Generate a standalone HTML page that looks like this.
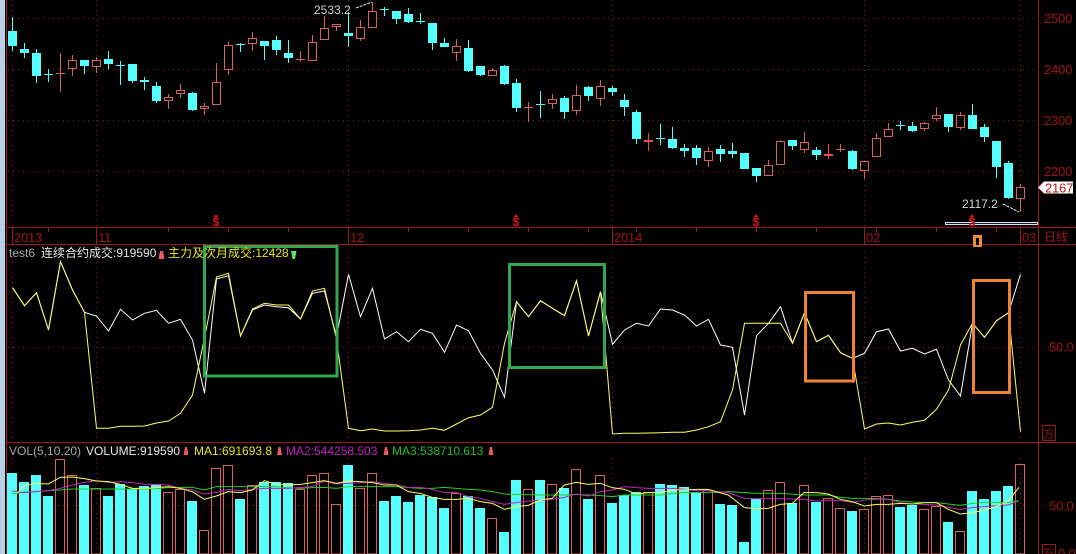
<!DOCTYPE html>
<html>
<head>
<meta charset="utf-8">
<style>
html,body{margin:0;padding:0;background:#000;width:1076px;height:554px;overflow:hidden}
svg{display:block;position:absolute;left:0;top:0}
text{font-family:"Liberation Sans","Noto Sans CJK SC",sans-serif;font-size:12px}
.ax{font-size:13px;letter-spacing:-.2px}
.dl{font-size:12px;font-weight:bold}
</style>
</head>
<body>
<svg width="1076" height="554" viewBox="0 0 1076 554" xmlns="http://www.w3.org/2000/svg">
<rect width="1076" height="554" fill="#000"/>
<rect x="0" y="0" width="5" height="554" fill="#b9d0e8"/>
<!-- grid -->
<g stroke="#8f1d1d" stroke-width="1" stroke-dasharray="1 4" fill="none">
<path d="M8 18.5H1038M8 69.5H1038M8 120.5H1038M8 171.5H1038"/>
<path d="M12.5 0V226M96.5 0V226M348.5 0V226M612.5 0V226M864.5 0V226M1020.5 0V226"/>
<path d="M8 347.5H1060"/>
<path d="M12.5 252V442M96.5 252V442M348.5 252V442M612.5 252V442M864.5 252V442M1020.5 252V442"/>
<path d="M8 505.5H1045"/>
<path d="M12.5 458V554M96.5 458V554M348.5 458V554M612.5 458V554M864.5 458V554M1020.5 458V554"/>
</g>
<!-- frame -->
<g stroke="#9c1a1a" stroke-width="1" fill="none">
<path d="M6.5 0V554M1038.5 0V554"/>
<path d="M6 227.5H1076M6 244.5H1076M6 442.5H1076"/>
<path d="M12.5 227V244M48.5 227V232M96.5 227V244M168.5 227V232M228.5 227V232M288.5 227V232M348.5 227V244M408.5 227V232M468.5 227V232M528.5 227V232M588.5 227V232M612.5 227V244M636.5 227V232M696.5 227V232M756.5 227V232M816.5 227V232M864.5 227V244M876.5 227V232M936.5 227V232M996.5 227V232M1020.5 227V244"/>
</g>
<!-- red candles -->
<path fill="none" stroke="#d9605c" stroke-width="1" d="M60.5 53V92M56 73.5h9
M72.5 55V60.5M72.5 68.5V76M68.5 60.5h8v8h-8z
M96.5 57V60.5M96.5 66.5V73M92.5 60.5h8v6h-8z
M168.5 94V97.5M168.5 100.5V109M164.5 97.5h8v3h-8z
M180.5 84V90.5M180.5 93.5V98M176.5 90.5h8v3h-8z
M204.5 103V106.5M204.5 108.5V115M200.5 106.5h8v2h-8z
M216.5 63V82.5M212.5 82.5h8v22h-8z
M228.5 42V45.5M228.5 69.5V75M224.5 45.5h8v24h-8z
M252.5 32V38.5M252.5 43.5V51M248.5 38.5h8v5h-8z
M300.5 51V62M296 59.5h9
M312.5 35V42.5M308.5 42.5h8v18h-8z
M324.5 16V28.5M320.5 28.5h8v11h-8z
M336.5 26.5V31M332.5 24.5h8v2h-8z
M360.5 20V27.5M360.5 38.5V41M356.5 27.5h8v11h-8z
M372.5 2V11.5M368.5 11.5h8v16h-8z
M456.5 39V46.5M456.5 52.5V61M452.5 46.5h8v6h-8z
M492.5 68V70.5M488.5 70.5h8v5h-8z
M528.5 102V122M524 107.5h9
M552.5 94V99.5M552.5 103.5V109M548.5 99.5h8v4h-8z
M576.5 85V95.5M576.5 110.5V115M572.5 95.5h8v15h-8z
M600.5 80V86.5M600.5 98.5V106M596.5 86.5h8v12h-8z
M708.5 147V151.5M708.5 160.5V167M704.5 151.5h8v9h-8z
M768.5 160V165.5M764.5 165.5h8v10h-8z
M780.5 140V141.5M776.5 141.5h8v23h-8z
M804.5 132V142.5M804.5 149.5V153M800.5 142.5h8v7h-8z
M840.5 144V152M836 149.5h9
M864.5 170.5V179M860.5 161.5h8v9h-8z
M876.5 133V138.5M872.5 138.5h8v18h-8z
M888.5 123V129.5M884.5 129.5h8v7h-8z
M924.5 122V123.5M924.5 128.5V131M920.5 123.5h8v5h-8z
M936.5 107V115.5M936.5 118.5V121M932.5 115.5h8v3h-8z
M960.5 112V115.5M960.5 127.5V130M956.5 115.5h8v12h-8z
M1020.5 184V187.5M1020.5 198.5V212M1016.5 187.5h8v11h-8z"/>
<path fill="none" stroke="#ee4d4d" stroke-width="1" d="M648.5 133V151M828.5 144V159"/>
<rect x="644" y="140" width="9" height="2" fill="#ee4d4d"/>
<rect x="824" y="154" width="9" height="2" fill="#ee4d4d"/>
<!-- cyan candles -->
<path fill="none" stroke="#55ffff" stroke-width="1" d="M12.5 17V51M24.5 43V58M36.5 49V83M48.5 69V82M44 74.5h9M84.5 60V74M108.5 51V69M120.5 61V85M116 65.5h9M132.5 64V83M144.5 77V90M156.5 82V103M192.5 92V111M240.5 43V52M236 44.5h9M264.5 41V60M276.5 36V55M288.5 40V63M348.5 12V47M384.5 7V16M380 9.5h9M396.5 11V24M408.5 8V23M420.5 13V24M416 21.5h9M432.5 23V50M444.5 38V47M468.5 40V72M480.5 66V76M504.5 65V85M516.5 79V112M540.5 91V118M536 104.5h9M564.5 96V119M588.5 86V101M612.5 86V96M624.5 94V116M636.5 110V144M660.5 124V145M656 138.5h9M672.5 127V149M684.5 144V157M696.5 145V165M720.5 145V162M732.5 143V158M744.5 153V169M756.5 168V182M792.5 140V150M816.5 147V160M852.5 150V170M900.5 121V130M896 125.5h9M912.5 122V132M948.5 114V132M972.5 104V129M984.5 124V142M996.5 141V178M1008.5 161V199"/>
<path fill="#55ffff" d="M8 31h9v15h-9zM20 49h9v4h-9zM32 53h9v23h-9zM80 60h9v6h-9zM104 59h9v5h-9zM128 64h9v17h-9zM140 80h9v2h-9zM152 86h9v15h-9zM188 93h9v17h-9zM260 41h9v5h-9zM272 40h9v10h-9zM284 53h9v5h-9zM344 33h9v3h-9zM392 11h9v8h-9zM404 14h9v8h-9zM428 23h9v20h-9zM440 43h9v4h-9zM464 48h9v23h-9zM476 66h9v9h-9zM500 66h9v18h-9zM512 83h9v25h-9zM560 98h9v14h-9zM584 87h9v9h-9zM608 88h9v4h-9zM620 100h9v7h-9zM632 112h9v27h-9zM668 139h9v9h-9zM680 148h9v3h-9zM692 148h9v10h-9zM716 149h9v5h-9zM728 151h9v3h-9zM740 153h9v16h-9zM752 168h9v8h-9zM788 140h9v6h-9zM812 150h9v5h-9zM848 151h9v18h-9zM908 126h9v5h-9zM944 114h9v13h-9zM968 115h9v14h-9zM980 127h9v10h-9zM992 141h9v26h-9zM1004 163h9v35h-9z"/>
<!-- price labels -->
<text x="314" y="14" fill="#d0d0d0" font-size="12">2533.2</text>
<path d="M356 8L372 2" stroke="#e8e8e8" stroke-width="1" stroke-dasharray="3 1" fill="none"/>
<text x="962" y="208" fill="#d8d8d8" font-size="12">2117.2</text>
<path d="M1003 204L1019 212" stroke="#e8e8e8" stroke-width="1" stroke-dasharray="3 1" fill="none"/>
<!-- white bar -->
<rect x="945.5" y="222.5" width="92" height="2" fill="#10182a" stroke="#d8e0f0" stroke-width="1"/>
<!-- $ marks -->
<g fill="#dd1414">
<path d="M216 214l-2.5 3h5zM516 214l-2.5 3h5zM756 214l-2.5 3h5zM972 214l-2.5 3h5z"/>
<text x="216" y="226" text-anchor="middle" class="dl">$</text>
<text x="516" y="226" text-anchor="middle" class="dl">$</text>
<text x="756" y="226" text-anchor="middle" class="dl">$</text>
<text x="972" y="226" text-anchor="middle" class="dl">$</text>
</g>
<!-- axis labels -->
<g fill="#a01414">
<text x="1044" y="23" class="ax">2500</text>
<text x="1044" y="74" class="ax">2400</text>
<text x="1044" y="125" class="ax">2300</text>
<text x="1044" y="176" class="ax">2200</text>
<text x="14" y="242" class="ax">2013</text>
<text x="98" y="242" class="ax">11</text>
<text x="350" y="242" class="ax">12</text>
<text x="614" y="242" class="ax">2014</text>
<text x="866" y="242" class="ax">02</text>
<text x="1022" y="242" class="ax">03</text>
<text x="1044" y="241" style="font-size:12px">日线</text>
<text x="1049" y="351.5" class="ax">50.0</text>
<text x="1049" y="510.5" class="ax">50.0</text>
<text x="1043" y="438" style="font-size:11px">万</text>
<text x="1043" y="557" style="font-size:11px">万</text>
<text x="1058" y="558" class="ax">0.0</text>
</g>
<g fill="none" stroke="#a01414"><rect x="1042.5" y="425.5" width="13" height="15"/><rect x="1042.5" y="544.5" width="13" height="15"/></g>
<!-- price tag -->
<path d="M1038 187.5L1044 181.5H1073V193.5H1044z" fill="#fff"/>
<text x="1045" y="192.5" fill="#c01818" class="ax">2167</text>
<!-- orange marker -->
<rect x="973" y="235" width="9" height="12" fill="#f08a3c"/>
<rect x="976" y="238" width="3" height="7" fill="#000"/>
<!-- middle lines -->
<polyline fill="none" stroke="#ffffff" stroke-width="1" points="12.5,287.7 24.5,305.7 36.5,292.7 48.5,330 60.5,261.7 72.5,290 84.5,312.3 96.5,316 108.5,331 120.5,309.3 132.5,320 144.5,313.3 156.5,310.3 168.5,323.3 180.5,319.3 192.5,340 204.5,393.3 216.5,279 228.5,275.7 240.5,336 252.5,310 264.5,305 276.5,306.7 288.5,307.7 300.5,319 312.5,293.3 324.5,291 336.5,336.7 348.5,274.3 360.5,316.7 372.5,288.3 384.5,339 396.5,331.7 408.5,341.7 420.5,329.3 432.5,333.3 444.5,352.3 456.5,325 468.5,330.7 480.5,353.3 492.5,370 504.5,397.3 516.5,301.7 528.5,316.7 540.5,300.7 552.5,308.3 564.5,315.7 576.5,280.7 588.5,336 600.5,291.7 612.5,344.3 624.5,330 636.5,323.3 648.5,326 660.5,309 672.5,310 684.5,315 696.5,326 708.5,319.3 720.5,345 732.5,347.3 744.5,415 756.5,335.7 768.5,323.3 780.5,306.7 792.5,343.3 804.5,312.7 816.5,341.7 828.5,335.3 840.5,352.7 852.5,358.3 864.5,353.3 876.5,331.7 888.5,329 900.5,351 912.5,348.3 924.5,354 936.5,349.3 948.5,380 960.5,396 972.5,323.3 984.5,337.3 996.5,320.7 1008.5,312.7 1020.5,274.3"/>
<polyline fill="none" stroke="#ffff66" stroke-width="1" points="12.5,287.7 24.5,305.7 36.5,292.7 48.5,330 60.5,261.7 72.5,290 84.5,312.3 96.5,428.3 108.5,428.3 120.5,426.3 132.5,426.3 144.5,426 156.5,423 168.5,421 180.5,413.3 192.5,395 204.5,338 216.5,277 228.5,273.3 240.5,336 252.5,309 264.5,303.3 276.5,305 288.5,305 300.5,319 312.5,291 324.5,288.3 336.5,339 348.5,428.3 360.5,430.7 372.5,429 384.5,431 396.5,431 408.5,430.7 420.5,430 432.5,428.3 444.5,430.3 456.5,424 468.5,417.7 480.5,415 492.5,407.3 504.5,343.3 516.5,301.7 528.5,316.7 540.5,300.7 552.5,308.3 564.5,315.7 576.5,280.7 588.5,336 600.5,291.7 612.5,434 624.5,433.3 636.5,433.3 648.5,433 660.5,432.7 672.5,432.3 684.5,432.3 696.5,430 708.5,426.7 720.5,421.7 732.5,390 744.5,323.3 756.5,323.3 768.5,323.3 780.5,323.3 792.5,343.3 804.5,312.7 816.5,341.7 828.5,335.3 840.5,352.7 852.5,358.3 864.5,429 876.5,424 888.5,423 900.5,425 912.5,422.3 924.5,420.3 936.5,409.3 948.5,390 960.5,345 972.5,323.3 984.5,337.3 996.5,320.7 1008.5,312.7 1020.5,431.7"/>
<!-- annotation rects -->
<g fill="none" stroke-width="3">
<rect x="204.5" y="246.5" width="132.5" height="129.5" stroke="#2fa84f"/>
<rect x="509.5" y="264.5" width="95" height="103" stroke="#2fa84f"/>
<rect x="805.5" y="292.5" width="48" height="88.5" stroke="#ee8336"/>
<rect x="973.5" y="280.5" width="36" height="112" stroke="#ee8336"/>
</g>
<!-- middle legend -->
<text x="9" y="257" fill="#a8a8a8">test6</text>
<text x="41" y="257" fill="#e8e8e8">连续合约成交:919590</text>
<path d="M160 251h3l1.5 8h-6z" fill="#e85a5a"/>
<text x="168" y="257" fill="#e6e620">主力及次月成交:12428</text>
<path d="M291 251h5.5l-1.5 8h-2.5z" fill="#5fe05f"/>
<!-- volume bars -->
<path fill="#55ffff" d="M7 473h10V554h-10zM19 482h10V554h-10zM31 475h10V554h-10zM43 496h10V554h-10zM79 485h10V554h-10zM103 496h10V554h-10zM115 484h10V554h-10zM127 489h10V554h-10zM139 486h10V554h-10zM151 484h10V554h-10zM187 501h10V554h-10zM235 499h10V554h-10zM259 482h10V554h-10zM271 482h10V554h-10zM283 483h10V554h-10zM343 465h10V554h-10zM379 501h10V554h-10zM391 496h10V554h-10zM403 502h10V554h-10zM415 495h10V554h-10zM427 497h10V554h-10zM439 508h10V554h-10zM463 496h10V554h-10zM475 508h10V554h-10zM499 532h10V554h-10zM511 480h10V554h-10zM535 480h10V554h-10zM559 488h10V554h-10zM583 499h10V554h-10zM607 503h10V554h-10zM619 495h10V554h-10zM631 492h10V554h-10zM655 484h10V554h-10zM667 485h10V554h-10zM679 487h10V554h-10zM691 492h10V554h-10zM715 504h10V554h-10zM727 505h10V554h-10zM739 542h10V554h-10zM751 499h10V554h-10zM787 503h10V554h-10zM811 502h10V554h-10zM847 511h10V554h-10zM895 507h10V554h-10zM907 505h10V554h-10zM943 522h10V554h-10zM967 491h10V554h-10zM979 499h10V554h-10zM991 491h10V554h-10zM1003 486h10V554h-10z"/>
<path fill="none" stroke="#d9605c" stroke-width="1" d="M55.5 554V459.5h9V554zM67.5 554V475.5h9V554zM91.5 554V488.5h9V554zM163.5 554V492.5h9V554zM175.5 554V489.5h9V554zM199.5 554V530.5h9V554zM211.5 554V468.5h9V554zM223.5 554V465.5h9V554zM247.5 554V485.5h9V554zM295.5 554V489.5h9V554zM307.5 554V475.5h9V554zM319.5 554V473.5h9V554zM331.5 554V504.5h9V554zM355.5 554V488.5h9V554zM367.5 554V473.5h9V554zM451.5 554V493.5h9V554zM487.5 554V518.5h9V554zM523.5 554V489.5h9V554zM547.5 554V484.5h9V554zM571.5 554V469.5h9V554zM595.5 554V475.5h9V554zM643.5 554V492.5h9V554zM703.5 554V490.5h9V554zM763.5 554V490.5h9V554zM775.5 554V482.5h9V554zM799.5 554V485.5h9V554zM823.5 554V498.5h9V554zM835.5 554V508.5h9V554zM859.5 554V509.5h9V554zM871.5 554V496.5h9V554zM883.5 554V495.5h9V554zM919.5 554V509.5h9V554zM931.5 554V506.5h9V554zM955.5 554V531.5h9V554zM1015.5 554V464.5h9V554z"/>
<!-- MA lines -->
<g fill="none" stroke-width="3">
<g transform="translate(0,440) scale(0.3333)">
<polyline stroke="#22cc22" points="37,162 73,156 109,155 145,152 181,150 217,147 253,147 289,147 325,147 361,147 397,147 433,147 469,146 505,143 541,142 577,142 613,150 649,140 685,140 721,140 757,140 793,140 829,140 865,143 901,145 937,143 973,142 1009,145 1045,140 1080,140"/>
<polyline stroke="#b828b8" points="37,153 73,158 109,155 145,152 181,145 217,135 253,127 289,122 325,127 361,125 397,128 433,133 469,133 505,135 541,145 577,150 613,162 649,157 685,148 721,152 757,148 793,145 829,145 865,145 901,142 937,140 973,123 1009,132 1045,130 1080,128"/>
<polyline stroke="#ffff55" points="50,160 73,137 109,130 145,132 181,112 217,111 253,116 289,123 325,125 361,133 397,145 433,145 469,143 505,140 541,145 577,155 613,178 649,168 685,155 721,158 757,150 793,122 829,133 865,135 901,133 937,128 973,122 1009,130 1045,123 1080,125"/>
</g>
<g transform="translate(360,440) scale(0.3333)">
<polyline stroke="#22cc22" points="0,140 37,140 109,140 181,145 217,145 253,142 289,145 325,148 361,150 397,155 433,162 469,164 505,164 541,165 577,165 613,165 649,163 685,165 721,167 757,170 793,165 829,165 865,165 901,165 937,160 973,158 1009,158 1045,157 1068,157"/>
<polyline stroke="#b828b8" points="0,128 37,125 73,130 109,135 145,142 181,142 217,148 253,158 289,157 325,170 361,175 397,185 433,193 469,188 505,183 541,180 577,178 613,172 649,162 685,168 721,155 757,150 793,140 829,143 865,145 901,145 937,145 973,148 1009,152 1045,152 1068,155"/>
<polyline stroke="#ffff55" points="0,125 37,128 73,135 109,135 145,155 181,160 217,172 253,178 289,178 325,175 361,185 397,190 433,208 469,200 505,196 541,180 577,175 613,135 649,127 685,133 721,130 757,143 793,148 829,162 865,158 901,158 937,150 973,150 1009,148 1045,148 1068,155"/>
</g>
<g transform="translate(716,440) scale(0.3333)">
<polyline stroke="#22cc22" points="0,157 37,155 121,160 193,160 265,165 301,165 337,165 373,172 409,175 445,175 481,176 517,178 553,183 589,186 625,188 661,188 697,192 733,196 769,190 805,187 841,187 877,187 909,182"/>
<polyline stroke="#b828b8" points="0,155 37,158 85,175 121,176 193,176 265,178 301,183 337,182 373,182 409,187 445,180 481,178 517,178 553,188 589,192 625,193 661,195 697,202 733,208 769,203 805,200 841,198 877,195 909,183"/>
<polyline stroke="#ffff55" points="0,155 37,165 85,203 121,206 157,205 193,193 229,190 265,157 301,158 337,162 373,178 409,185 445,198 481,193 517,193 553,190 589,192 625,188 661,188 697,208 733,222 769,218 805,211 841,200 877,183 909,142"/>
</g>
</g>
<!-- volume legend -->
<text x="9" y="455" fill="#a8a8a8">VOL(5,10,20)</text>
<text x="86" y="455" fill="#e8e8e8">VOLUME:919590</text>
<path d="M185 447h2l1.5 8h-5z" fill="#e85a5a"/>
<text x="194" y="455" fill="#e6e620">MA1:691693.8</text>
<path d="M278.5 447h2l1.5 8h-5z" fill="#e85a5a"/>
<text x="286" y="455" fill="#c020c0">MA2:544258.503</text>
<path d="M385 447h2l1.5 8h-5z" fill="#e85a5a"/>
<text x="392" y="455" fill="#20c020">MA3:538710.613</text>
<path d="M490 447h2l1.5 8h-5z" fill="#e85a5a"/>
</svg>
</body>
</html>
